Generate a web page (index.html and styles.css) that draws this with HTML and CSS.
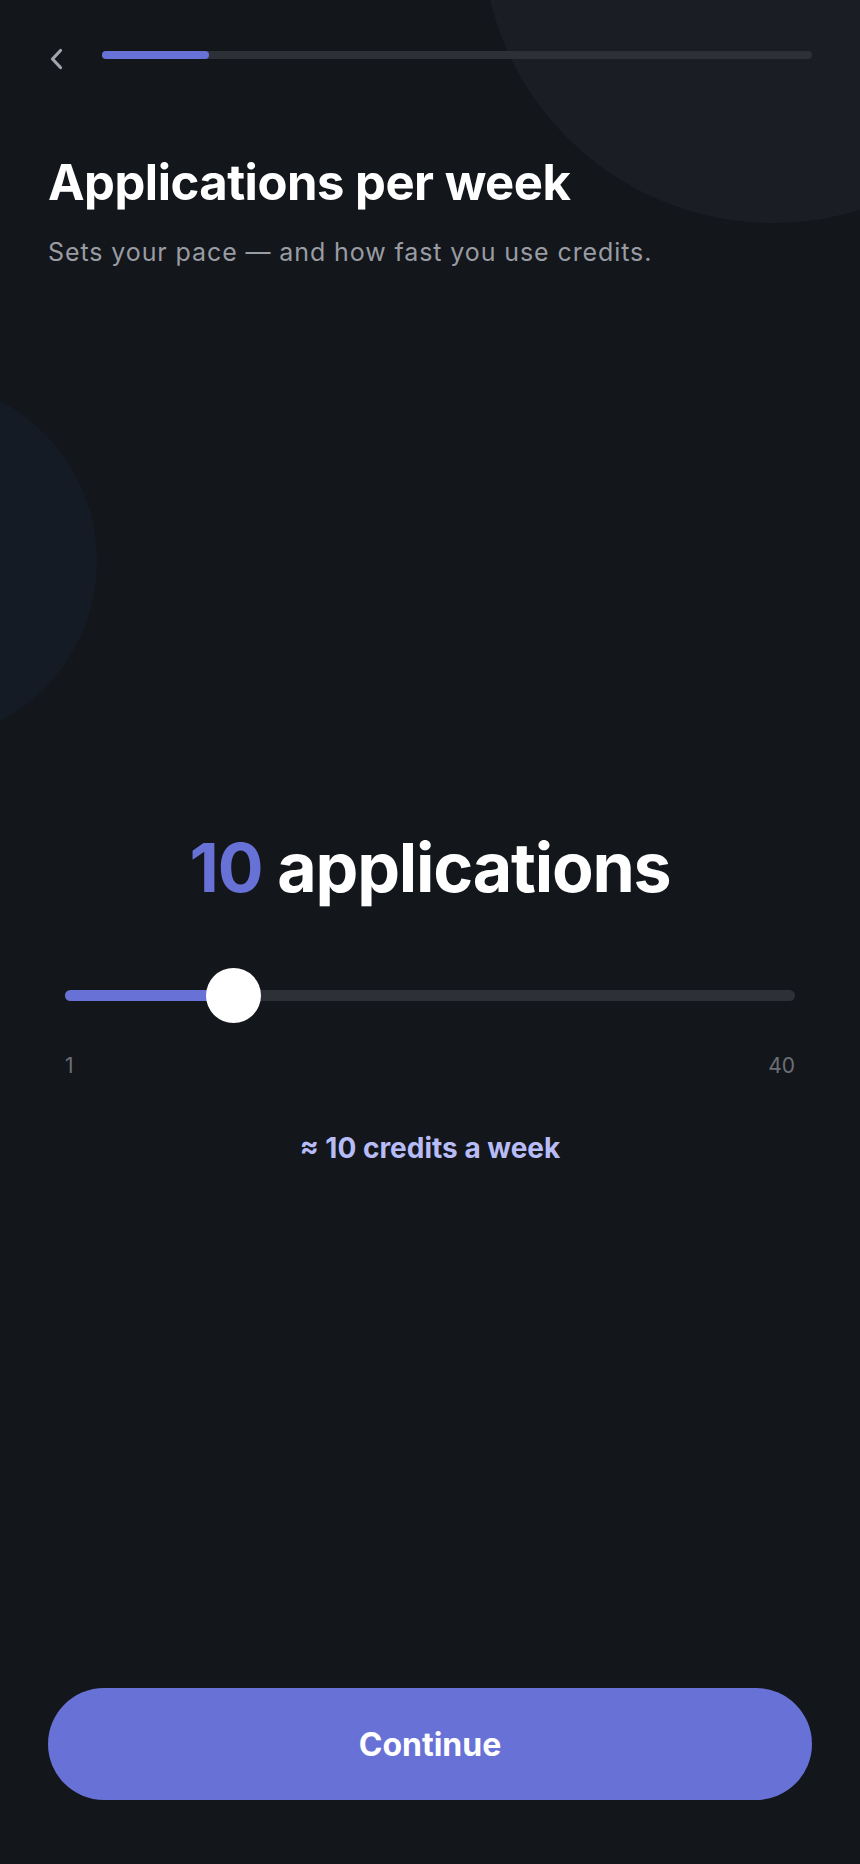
FILE: index.html
```html
<!DOCTYPE html>
<html lang="en">
<head>
    <meta charset="UTF-8">
    <meta name="viewport" content="width=device-width, initial-scale=1.0">
    <title>Applications per week</title>
    <link rel="stylesheet" href="styles.css">
</head>
<body>
  <div class="screen">
    <!-- background blobs -->
    <div class="blob blob-top"></div>
    <div class="blob blob-left"></div>

    <!-- top bar: back + progress -->
    <header class="topbar">
      <button class="back" aria-label="Back">
        <svg width="16" height="24" viewBox="0 0 16 24">
          <path d="M12.5 3.5 L4.5 12 L12.5 20.5" fill="none" stroke="#a2a5ab" stroke-width="3.2" stroke-linecap="round" stroke-linejoin="round"/>
        </svg>
      </button>
      <div class="progress"><div class="progress-fill" style="width: 15%"></div></div>
    </header>

    <h1 class="title">Applications per week</h1>
    <p class="subtitle">Sets your pace — and how fast you use credits.</p>

    <section class="picker">
      <div class="value"><span class="num">10</span> applications</div>

      <div class="slider">
        <div class="track">
          <div class="fill" style="width: 23.08%"></div>
          <div class="thumb" style="left: 23.08%"></div>
        </div>
      </div>
      <div class="range">
        <span>1</span>
        <span>40</span>
      </div>

      <div class="credits">≈ 10 credits a week</div>
    </section>

    <button class="continue">Continue</button>
  </div>
</body>
</html>
```

FILE: styles.css
```css
body {
  margin: 0;
  background-color: #13161b;
  font-family: Inter, "Noto Sans", Arial, sans-serif;
  color: #ffffff;
}

.screen {
  position: relative;
  overflow: hidden;
  height: 1864px;
  box-sizing: border-box;
  padding: 0 48px;
  display: flex;
  flex-direction: column;
}

/* decorative circles */
.blob {
  position: absolute;
  border-radius: 50%;
  z-index: 0;
}
.blob-top {
  width: 582px;
  height: 582px;
  left: 482px;
  top: -359px;
  background-color: #1a1d24;
}
.blob-left {
  width: 362px;
  height: 362px;
  left: -265px;
  top: 380px;
  background-color: #141b25;
}

.screen > :not(.blob) {
  position: relative;
  z-index: 1;
}

.topbar {
  display: flex;
  align-items: center;
  gap: 36px;
  margin-top: 43px;
  height: 24px;
}

.back {
  background: none;
  border: none;
  padding: 0;
  width: 18px;
  height: 24px;
  margin-top: 8px;
  display: flex;
  align-items: center;
}

.progress {
  flex: 1;
  height: 8px;
  border-radius: 4px;
  background-color: #2d3036;
}
.progress-fill {
  height: 100%;
  border-radius: 4px;
  background-color: #6872d6;
}

.title {
  margin: 88px 0 0;
  font-size: 49px;
  line-height: 56px;
  font-weight: 700;
  letter-spacing: -0.5px;
}

.subtitle {
  margin: 27px 0 0;
  font-size: 25px;
  line-height: 28px;
  letter-spacing: 0.9px;
  color: #999ca3;
}

.picker {
  margin-top: 563px;
  display: flex;
  flex-direction: column;
}

.value {
  text-align: center;
  font-size: 68px;
  line-height: 76px;
  font-weight: 700;
  letter-spacing: -1.2px;
}
.value .num {
  color: #6872d6;
}

.slider {
  margin-top: 62px;
  padding: 0 17px;
  height: 56px;
  display: flex;
  align-items: center;
}
.track {
  position: relative;
  flex: 1;
  height: 11px;
  border-radius: 6px;
  background-color: #2d3036;
}
.fill {
  height: 100%;
  border-radius: 6px;
  background-color: #6872d6;
}
.thumb {
  position: absolute;
  top: 50%;
  width: 55px;
  height: 55px;
  margin: -27.5px 0 0 -27.5px;
  border-radius: 50%;
  background-color: #ffffff;
}

.range {
  margin-top: 31px;
  padding: 0 17px;
  display: flex;
  justify-content: space-between;
  font-size: 21px;
  line-height: 24px;
  color: #6c6f76;
}

.credits {
  margin-top: 54px;
  text-align: center;
  font-size: 28px;
  line-height: 32px;
  font-weight: 700;
  color: #b8bcf6;
}

.continue {
  margin-top: auto;
  margin-bottom: 64px;
  height: 112px;
  border: none;
  border-radius: 56px;
  background-color: #6872d6;
  color: #ffffff;
  font-family: inherit;
  font-size: 32px;
  font-weight: 700;
  cursor: pointer;
}
```
